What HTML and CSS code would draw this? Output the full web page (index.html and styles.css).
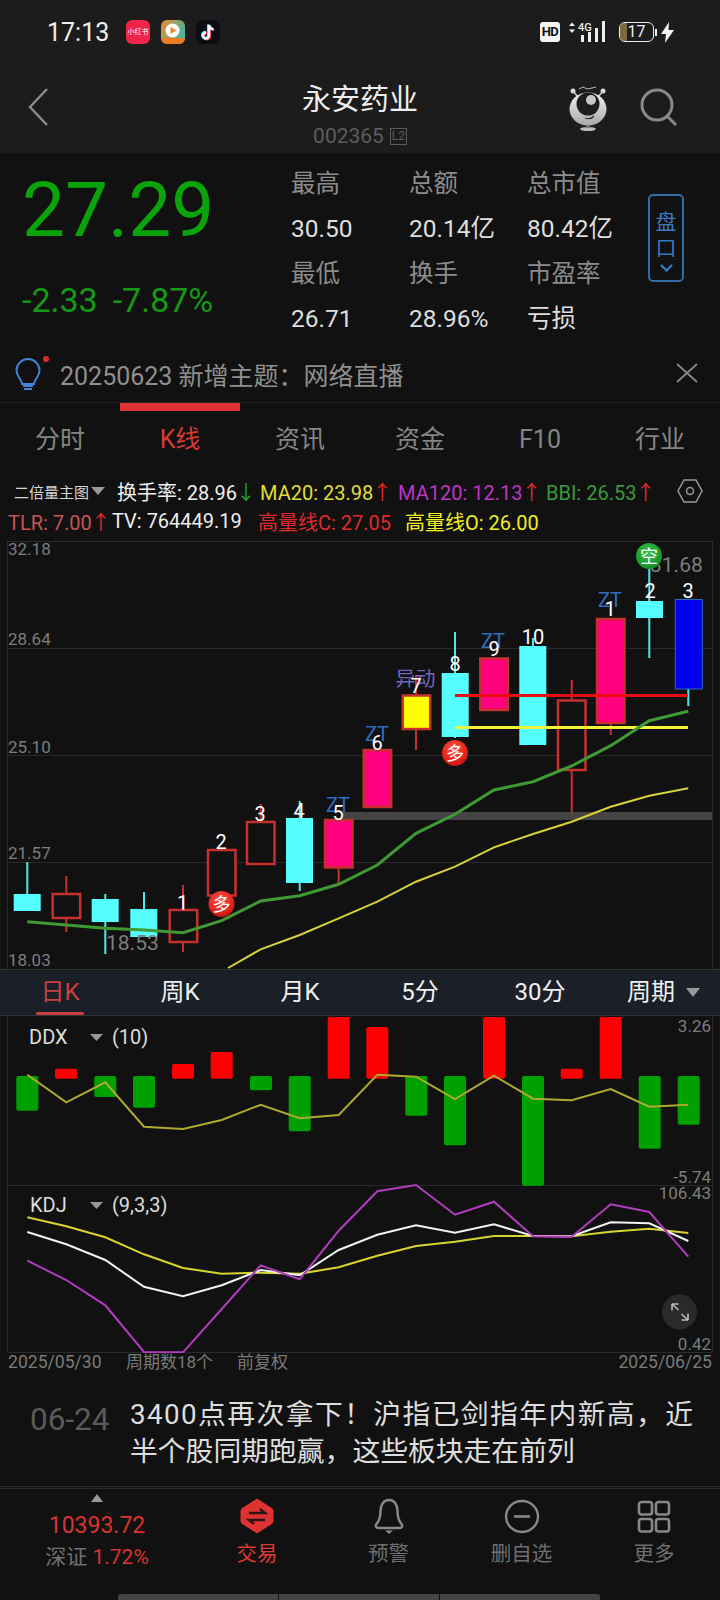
FILE: index.html
```html
<!DOCTYPE html>
<html lang="zh-CN">
<head>
<meta charset="utf-8">
<title>永安药业</title>
<link rel="stylesheet" href="styles.css">
</head>
<body>
<div class="page">
  <header class="top">
    <div class="status">
      <span class="time">17:13</span>
      <div class="apps">
        <span class="app app-red">小红书</span>
        <svg class="app-svg" viewBox="0 0 24 24"><defs><linearGradient id="og" x1="0" y1="0" x2="1" y2="0.6"><stop offset="0" stop-color="#f08a2c"/><stop offset="1" stop-color="#3fb8a0"/></linearGradient></defs><rect width="24" height="24" rx="6" fill="url(#og)"/><path d="M0 18h24v0a6 6 0 0 1-6 6H6a6 6 0 0 1-6-6z" fill="#ee7a22"/><circle cx="11.5" cy="10.5" r="7" fill="#fff"/><path d="M9.5 7l6 3.5-6 3.5z" fill="#ee8a2c"/></svg>
        <svg class="app-svg" viewBox="0 0 24 24"><rect width="24" height="24" rx="6" fill="#0b0b14"/><path d="M13 5v10.5a3 3 0 1 1-3-3" fill="none" stroke="#25f4ee" stroke-width="2.6" transform="translate(-.8 -.4)"/><path d="M13 5c.4 2.6 2 4 4.4 4.3" fill="none" stroke="#25f4ee" stroke-width="2.6" transform="translate(-.8 -.4)"/><path d="M13 5v10.5a3 3 0 1 1-3-3" fill="none" stroke="#fe2c55" stroke-width="2.6" transform="translate(.8 .6)"/><path d="M13 5c.4 2.6 2 4 4.4 4.3" fill="none" stroke="#fe2c55" stroke-width="2.6" transform="translate(.8 .6)"/><path d="M13 5v10.5a3 3 0 1 1-3-3M13 5c.4 2.6 2 4 4.4 4.3" fill="none" stroke="#fff" stroke-width="2.4"/></svg>
      </div>
      <div class="sys">
        <span class="hd">HD</span>
        <svg class="signal" viewBox="0 0 38 22"><path d="M3 1.5l3 3.5H0zM3 12l3-3.500H0z" fill="#eee"/><text class="net" x="9" y="10">4G</text><rect x="12" y="14" width="3" height="7" fill="#eee"/><rect x="19" y="11" width="3" height="10" fill="#eee"/><rect x="26" y="7" width="3" height="14" fill="#eee"/><rect x="33" y="0" width="3" height="21" fill="#eee"/></svg>
        <div class="battery"><span class="battery-fill"></span><span class="battery-num">17</span></div>
        <span class="battery-cap"></span>
        <svg class="bolt" viewBox="0 0 13 21"><path d="M8 0L0 12h5l-1 9 9-13H7.500z" fill="#f2f2f2"/></svg>
      </div>
    </div>
    <div class="titlebar">
      <svg class="back" viewBox="0 0 20 38"><path d="M19 1L2 19l17 18" fill="none" stroke="#8c8c8c" stroke-width="2.400"/></svg>
      <div class="title">
        <div class="name">永安药业</div>
        <div class="code">002365<span class="l2">L2</span></div>
      </div>
      <svg class="mascot" viewBox="0 0 40 46"><defs><linearGradient id="mg" x1="0" y1="0" x2="0" y2="1"><stop offset="0" stop-color="#f2f2f2"/><stop offset="1" stop-color="#a8a8a8"/></linearGradient></defs><circle cx="5" cy="5" r="2.500" fill="#ddd"/><circle cx="35" cy="5" r="2.500" fill="#ddd"/><path d="M5 5l5 6M35 5l-5 6" stroke="#ccc" stroke-width="1.500"/><path d="M11 3l4-2 4 2 5-1 4-1" fill="none" stroke="#bbb" stroke-width="1"/><ellipse cx="20" cy="23" rx="18.500" ry="16.500" fill="url(#mg)"/><circle cx="20" cy="18" r="11.500" fill="#1d1d1d"/><circle cx="23" cy="14" r="5" fill="#c8c8c8"/><path d="M17 32q6 2 9-2" fill="none" stroke="#333" stroke-width="1.300"/><ellipse cx="20" cy="43" rx="8" ry="2" fill="#bbb"/><rect x="18" y="39" width="4" height="3" fill="#777"/></svg>
      <svg class="search" viewBox="0 0 38 38"><circle cx="17" cy="17" r="15" fill="none" stroke="#888" stroke-width="3"/><path d="M27 28l9 9" stroke="#888" stroke-width="3"/></svg>
    </div>
  </header>

  <section class="quote">
    <div class="price">
      <div class="last">27.29</div>
      <div class="chg"><span>-2.33</span><span>-7.87%</span></div>
    </div>
    <dl class="stats">
      <div class="stat"><dt>最高</dt><dd>30.50</dd></div>
      <div class="stat"><dt>总额</dt><dd>20.14亿</dd></div>
      <div class="stat"><dt>总市值</dt><dd>80.42亿</dd></div>
      <div class="stat"><dt>最低</dt><dd>26.71</dd></div>
      <div class="stat"><dt>换手</dt><dd>28.96%</dd></div>
      <div class="stat"><dt>市盈率</dt><dd>亏损</dd></div>
    </dl>
    <div class="pankou">
      <span>盘</span><span>口</span>
      <svg class="chev" viewBox="0 0 13 8"><path d="M1 1l5.500 5.500L12 1" fill="none" stroke="#3a78bd" stroke-width="2.400"/></svg>
    </div>
  </section>

  <section class="notice">
    <div class="bulb">
      <svg viewBox="0 0 34 34"><path d="M13 3a11.500 11.500 0 0 0-11.500 11.500c0 5 3.500 7.500 5 11.500 .3 .8 .5 1.500 .5 2h12c0-.5 .2-1.200 .5-2 1.500-4 5-6.500 5-11.500A11.500 11.500 0 0 0 13 3z" fill="none" stroke="#3f86d6" stroke-width="2"/><path d="M8 30h10M9 33h8" stroke="#3f86d6" stroke-width="1.800"/><circle cx="31" cy="3" r="3" fill="#e02b2b"/></svg>
    </div>
    <div class="notice-text">20250623 新增主题：网络直播</div>
    <svg class="close" viewBox="0 0 22 20"><path d="M1 1l20 18M21 1L1 19" stroke="#888" stroke-width="1.800"/></svg>
  </section>

  <nav class="tabs">
    <span class="tab">分时</span>
    <span class="tab active">K线</span>
    <span class="tab">资讯</span>
    <span class="tab">资金</span>
    <span class="tab">F10</span>
    <span class="tab">行业</span>
  </nav>

  <section class="legend">
    <div class="legend-row">
      <span class="mode">二倍量主图<i class="tri"></i></span>
      <span class="c-white lg-a">换手率: 28.96<b class="c-green">↓</b></span>
      <span class="c-yellow lg-b">MA20: 23.98<b class="c-red">↑</b></span>
      <span class="c-purple lg-c">MA120: 12.13<b class="c-red">↑</b></span>
      <span class="c-green2">BBI: 26.53<b class="c-red">↑</b></span>
      <svg class="hex" viewBox="0 0 26 26"><path d="M7 2h12l6 11-6 11H7L1 13z" fill="none" stroke="#999" stroke-width="1.500"/><circle cx="13" cy="13" r="3.500" fill="none" stroke="#999" stroke-width="1.500"/></svg>
    </div>
    <div class="legend-row row2">
      <span class="c-tlr lg-t">TLR: 7.00<b class="c-red">↑</b></span>
      <span class="c-white lg-v">TV: 764449.19</span>
      <span class="c-red lg-h">高量线C: 27.05</span>
      <span class="c-yl2">高量线O: 26.00</span>
    </div>
  </section>

  <svg class="chart" viewBox="0 541 720 428" width="720" height="428">
    <defs>
      <radialGradient id="redball" cx="0.45" cy="0.35" r="0.7"><stop offset="0" stop-color="#ff5a4a"/><stop offset="0.7" stop-color="#e2201a"/><stop offset="1" stop-color="#b01410"/></radialGradient>
      <radialGradient id="greenball" cx="0.45" cy="0.35" r="0.7"><stop offset="0" stop-color="#36c04a"/><stop offset="1" stop-color="#0f8a24"/></radialGradient>
    </defs>
    <g class="grid">
      <path d="M8 541.500H712M8 648.500H712M8 755.500H712M8 862.500H712M7.500 541V969M712.500 541V969"/>
    </g>
    <rect class="band" x="343" y="812" width="369" height="8"/>
    <g class="wick-c">
      <path d="M27.300 862V894M105.300 894V954M144 892V937M299.700 801V891M455 632V738M533 638V646M649.300 563V658M688.300 689V706"/>
    </g>
    <g class="wick-r">
      <path d="M66.300 876V932M183 885V952M260.700 804V821M338.700 867V885M416 675V750M571.700 680V813M610.700 723V735"/>
    </g>
    <rect class="c-body" x="13.700" y="894" width="27" height="17"/>
    <rect class="c-body" x="91.700" y="899" width="27" height="23"/>
    <rect class="c-body" x="130.300" y="909" width="27" height="28"/>
    <rect class="c-body" x="286" y="818" width="27" height="65"/>
    <rect class="c-body" x="441.700" y="673" width="27" height="64"/>
    <rect class="c-body" x="519.300" y="646" width="27" height="99"/>
    <rect class="c-body" x="636" y="601" width="27" height="17"/>
    <rect class="h-body" x="52.700" y="894" width="27.500" height="24"/>
    <rect class="h-body" x="169.700" y="910" width="27.500" height="32"/>
    <rect class="h-body" x="208" y="850" width="27.500" height="45.500"/>
    <rect class="h-body" x="247" y="822" width="27.500" height="42"/>
    <rect class="h-body" x="558" y="700.500" width="27.500" height="69.500"/>
    <rect class="p-body" x="325" y="820" width="27.500" height="47.500"/>
    <rect class="p-body" x="363.700" y="750" width="27.500" height="57"/>
    <rect class="p-body" x="480.300" y="658.500" width="27.500" height="51.500"/>
    <rect class="p-body" x="597" y="619" width="27.500" height="104"/>
    <rect class="y-body" x="402.700" y="695.500" width="27.500" height="33.500"/>
    <rect class="b-body" x="675.300" y="599.500" width="27" height="89.500"/>
    <path class="l-red" d="M455 695.500H688"/>
    <path class="l-yel" d="M455 727.500H688"/>
    <path class="ma120" d="M228 968L260.700 949.300L299.700 935L338.700 918.300L377.300 901.700L416 881.700L455 866.700L494 847.300L533 834L571.700 821.700L610.700 806.700L649.300 795.700L688.300 788.300"/>
    <path class="ma20" d="M27.300 921.700L66.300 925L105.300 928.300L144 930L183 932.700L221.700 920.700L260.700 901L299.700 895.700L338.700 884.300L377.300 865L416 833.300L455 814.300L494 790L533 781.700L571.700 766L610.700 745.700L649.300 720.700L688.300 711.300"/>
    <text class="ax" x="8" y="549">32.18</text>
    <text class="ax" x="8" y="639">28.64</text>
    <text class="ax" x="8" y="747">25.10</text>
    <text class="ax" x="8" y="853">21.57</text>
    <text class="ax" x="8" y="960">18.03</text>
    <text class="mark" x="106" y="943">18.53</text>
    <text class="mark" x="650" y="565">31.68</text>
    <g class="zt">
      <text x="338" y="805">ZT</text><text x="377" y="734">ZT</text><text x="493" y="641">ZT</text><text x="610" y="600">ZT</text>
      <text class="yd" x="415.500" y="679">异动</text>
    </g>
    <g class="num">
      <text x="182.500" y="903">1</text><text x="221" y="842">2</text><text x="260" y="814">3</text><text x="299" y="811">4</text><text x="338" y="813">5</text><text x="377" y="743">6</text><text x="416" y="686">7</text><text x="455" y="664">8</text><text x="494" y="649">9</text><text x="533" y="637">10</text><text x="610" y="609">1</text><text x="650" y="591">2</text><text x="688" y="591">3</text>
    </g>
    <circle class="dot-r" cx="221.500" cy="904" r="13"/><text class="dot-t" x="221.500" y="904">多</text>
    <circle class="dot-r" cx="455" cy="753" r="13"/><text class="dot-t" x="455" y="753">多</text>
    <circle class="dot-g" cx="649" cy="556" r="13"/><text class="dot-t" x="649" y="556">空</text>
  </svg>

  <nav class="periods">
    <span class="period active">日K</span>
    <span class="period">周K</span>
    <span class="period">月K</span>
    <span class="period">5分</span>
    <span class="period">30分</span>
    <span class="period more">周期<i class="tri tri-lg"></i></span>
  </nav>

  <svg class="panes" viewBox="0 1016 720 337" width="720" height="337">
    <path class="gridline" d="M7.500 1016V1353M712.500 1016V1353M8 1185.500H712M8 1352.500H712"/>
    <g class="gbar">
      <rect x="16.300" y="1076" width="22" height="34.700" rx="2"/><rect x="94.300" y="1076" width="22" height="21" rx="2"/><rect x="133" y="1076" width="22" height="31.700" rx="2"/><rect x="250" y="1076" width="22" height="14.300" rx="2"/><rect x="288.700" y="1076" width="22" height="55.300" rx="2"/><rect x="405.300" y="1076" width="22" height="39.700" rx="2"/><rect x="444" y="1076" width="22" height="69.300" rx="2"/><rect x="522" y="1076" width="22" height="109.700" rx="2"/><rect x="638.700" y="1076" width="22" height="72.700" rx="2"/><rect x="677.700" y="1076" width="22" height="48.700" rx="2"/>
    </g>
    <g class="rbar">
      <rect x="55" y="1068.700" width="22" height="10" rx="2"/><rect x="172" y="1064" width="22" height="14.700" rx="2"/><rect x="210.700" y="1052" width="22" height="26.700" rx="2"/><rect x="327.700" y="1017" width="22" height="61.700" rx="2"/><rect x="366.300" y="1027" width="22" height="51.700" rx="2"/><rect x="483" y="1017" width="22" height="61.700" rx="2"/><rect x="560.700" y="1068.700" width="22" height="10" rx="2"/><rect x="599.700" y="1017" width="22" height="61.700" rx="2"/>
    </g>
    <path class="ddx" d="M27.300 1074.700L66.300 1102.300L105.300 1082.300L144 1126.700L183 1129L221.700 1120L260.700 1104.700L299.700 1118.300L338.700 1115L377.300 1074.700L416 1076.700L455 1099L494 1075.700L533 1098.700L571.700 1100.300L610.700 1089L649.300 1106.700L688.300 1104.700"/>
    <path class="kd-y" d="M27.300 1217.300L66.300 1226.300L105.300 1237.300L144 1254.300L183 1268L221.700 1273.700L260.700 1272.700L299.700 1273.700L338.700 1267.300L377.300 1255.700L416 1246L455 1241.700L494 1236L533 1236L571.700 1236.300L610.700 1231.700L649.300 1228.700L688.300 1233"/>
    <path class="kd-w" d="M27.300 1232L66.300 1244.300L105.300 1260L144 1286.700L183 1296.300L221.700 1285.300L260.700 1270L299.700 1275.300L338.700 1250L377.300 1234.700L416 1225.300L455 1232.700L494 1224.300L533 1236L571.700 1236.300L610.700 1222.300L649.300 1223.300L688.300 1241"/>
    <path class="kd-p" d="M27.300 1260.700L66.300 1280L105.300 1305.300L144 1352L183 1352.300L221.700 1309L260.700 1265.300L299.700 1279.300L338.700 1230.700L377.300 1191.300L416 1185L455 1214.700L494 1201.700L533 1236.300L571.700 1236.700L610.700 1204.300L649.300 1212L688.300 1256.700"/>
    <text class="pane-t" x="29" y="1037">DDX</text><path class="tri-s" d="M90 1034h13l-6.500 7z"/><text class="pane-t" x="112" y="1037">(10)</text>
    <text class="pane-t" x="30" y="1205">KDJ</text><path class="tri-s" d="M90 1202h13l-6.500 7z"/><text class="pane-t" x="112" y="1205">(9,3,3)</text>
    <text class="ax end" x="711" y="1026">3.26</text>
    <text class="ax end" x="711" y="1177">-5.74</text>
    <text class="ax end" x="711" y="1193">106.43</text>
    <text class="ax end" x="711" y="1344">0.42</text>
    <circle cx="679.500" cy="1312" r="17.500" fill="#2a2a2a"/>
    <path class="expand" d="M672 1304l6.500 6M672 1304v6.500M672 1304h6.500M688 1320l-6.500-6M688 1320v-6.500M688 1320h-6.500"/>
  </svg>

  <div class="dates">
    <span class="d-start">2025/05/30</span>
    <span class="d-count">周期数18个</span>
    <span class="d-adj">前复权</span>
    <span class="d-end">2025/06/25</span>
  </div>

  <section class="news">
    <span class="news-date">06-24</span>
    <p class="news-title"><span class="line-a">3400点再次拿下！沪指已剑指年内新高，近</span><span class="line-b">半个股同期跑赢，这些板块走在前列</span></p>
  </section>

  <footer class="bottom">
    <div class="bottom-item index">
      <i class="tri-up"></i>
      <span class="idx-val">10393.72</span>
      <span class="idx-name">深证 <em>1.72%</em></span>
    </div>
    <div class="bottom-item act">
      <svg class="b-icon" viewBox="0 0 36 36"><path d="M18 0.500L32 9.500C33.500 10.500 34.500 11.500 34.500 13.500V22.500C34.500 24.500 33.500 25.500 32 26.500L18 35.500L4 26.500C2.500 25.500 1.500 24.500 1.500 22.500V13.500C1.500 11.500 2.500 10.500 4 9.500z" fill="#de3230"/><path d="M10 15H26L21 11M26 22H10L15 26" fill="none" stroke="#2a1414" stroke-width="2.400"/></svg>
      <span class="b-label">交易</span>
    </div>
    <div class="bottom-item">
      <svg class="b-icon" viewBox="0 0 36 36"><path d="M18 2C12 2 9.500 8 9.500 13C9.500 20 8 23 5.500 26C4 28 5 30 7.500 30H28.500C31 30 32 28 30.500 26C28 23 26.500 20 26.500 13C26.500 8 24 2 18 2z" fill="none" stroke="#888" stroke-width="2.500"/><path d="M14 32.500h8l-4 3.500z" fill="#888"/></svg>
      <span class="b-label">预警</span>
    </div>
    <div class="bottom-item">
      <svg class="b-icon" viewBox="0 0 36 36"><ellipse cx="18" cy="18.500" rx="16" ry="15.500" fill="none" stroke="#888" stroke-width="2.400"/><path d="M10 18.500h16" stroke="#888" stroke-width="2.600"/></svg>
      <span class="b-label">删自选</span>
    </div>
    <div class="bottom-item">
      <svg class="b-icon" viewBox="0 0 36 36"><g fill="none" stroke="#888" stroke-width="2.600"><rect x="3" y="4" width="13" height="12.500" rx="2.500"/><rect x="20" y="4" width="13" height="12.500" rx="2.500"/><rect x="3" y="21" width="13" height="12.500" rx="2.500"/><rect x="20" y="21" width="13" height="12.500" rx="2.500"/></g></svg>
      <span class="b-label">更多</span>
    </div>
  </footer>

  <div class="gesture"><span></span><span></span><span></span></div>
</div>
</body>
</html>
```
FILE: styles.css
```css
* { box-sizing: border-box; }
html, body { margin: 0; padding: 0; background: #111; }
body { font-family: Roboto, "Noto Sans CJK SC", sans-serif; color: #ddd; }
.page { width: 720px; height: 1600px; overflow: hidden; background: #111; display: flex; flex-direction: column; }
svg { display: block; }

/* header */
.top { background: #1c1c1c; height: 153px; flex: none; }
.status { height: 64px; display: flex; align-items: center; padding: 0 46px 0 47px; }
.time { font-size: 25px; color: #eee; width: 79px; }
.apps { display: flex; gap: 11px; }
.app { width: 24px; height: 24px; border-radius: 6px; display: flex; align-items: center; justify-content: center; font-size: 7px; line-height: 1; color: #fff; white-space: nowrap; }
.app-red { background: #f0234a; }
.app-svg { width: 24px; height: 24px; }
.sys { margin-left: auto; display: flex; align-items: center; }
.hd { width: 20px; height: 20px; background: #f5f5f5; color: #111; border-radius: 3px; font-size: 13px; font-weight: 700; text-align: center; line-height: 20px; letter-spacing: -.5px; }
.signal { width: 38px; height: 22px; margin-left: 9px; }
.net { font-size: 11px; font-weight: 500; fill: #eee; }
.battery { position: relative; width: 35px; height: 20px; margin-left: 12px; border: 1.500px solid #eee; border-radius: 6px; overflow: hidden; text-align: center; }
.battery-fill { position: absolute; left: 0; top: 0; bottom: 0; width: 7px; background: #7d6a3c; }
.battery-num { position: relative; font-size: 16px; line-height: 17px; display: block; color: #eee; }
.battery-cap { width: 2px; height: 7px; margin-left: 1px; background: #eee; }
.bolt { width: 13px; height: 21px; margin-left: 4px; }
.titlebar { height: 89px; display: flex; align-items: flex-start; position: relative; }
.back { position: absolute; left: 28px; top: 24px; width: 20px; height: 38px; }
.title { width: 100%; text-align: center; padding-top: 16px; }
.name { font-size: 29px; line-height: 40px; color: #eee; }
.code { font-size: 21px; line-height: 26px; color: #5c5c5c; display: flex; justify-content: center; align-items: center; margin-top: 3px; }
.l2 { width: 17px; font-size: 12px; line-height: 15px; border: 1px solid #5c5c5c; margin-left: 6px; text-align: center; }
.mascot { position: absolute; left: 568px; top: 22px; width: 40px; height: 46px; }
.search { position: absolute; left: 640px; top: 24px; width: 38px; height: 38px; }

/* quote */
.quote { flex: none; height: 192px; display: flex; position: relative; }
.price { width: 291px; padding-left: 22px; }
.last { font-size: 76.500px; line-height: 88px; color: #0aa40a; margin-top: 13px; }
.chg { display: flex; gap: 15px; font-size: 34px; line-height: 44px; color: #159a15; margin-top: 24px; }
.stats { margin: 0; display: grid; grid-template-rows: repeat(4, 45px); grid-template-columns: repeat(3, 118px); padding-top: 8px; align-content: start; }
.stat { display: contents; }
.stats dt, .stats dd { margin: 0; font-size: 24.500px; line-height: 45px; white-space: nowrap; }
.stats dt { color: #8c8c8c; }
.stats dd { color: #dedede; }
.stat:nth-child(1) dt { grid-area: 1 / 1; } .stat:nth-child(1) dd { grid-area: 2 / 1; }
.stat:nth-child(2) dt { grid-area: 1 / 2; } .stat:nth-child(2) dd { grid-area: 2 / 2; }
.stat:nth-child(3) dt { grid-area: 1 / 3; } .stat:nth-child(3) dd { grid-area: 2 / 3; }
.stat:nth-child(4) dt { grid-area: 3 / 1; } .stat:nth-child(4) dd { grid-area: 4 / 1; }
.stat:nth-child(5) dt { grid-area: 3 / 2; } .stat:nth-child(5) dd { grid-area: 4 / 2; }
.stat:nth-child(6) dt { grid-area: 3 / 3; } .stat:nth-child(6) dd { grid-area: 4 / 3; }
.pankou { position: absolute; left: 648px; top: 41px; width: 36px; height: 88px; border: 2px solid #2f6ca8; border-radius: 5px; display: flex; flex-direction: column; align-items: center; color: #3a78bd; font-size: 21px; line-height: 26px; padding-top: 13px; }
.chev { width: 13px; height: 8px; margin-top: 3px; }

/* notice */
.notice { flex: none; height: 58px; display: flex; align-items: center; border-bottom: 1px solid #232323; position: relative; }
.bulb { width: 34px; height: 34px; margin-left: 15px; margin-top: -2px; }
.notice-text { margin-left: 11px; font-size: 25px; color: #8f8f8f; white-space: nowrap; }
.close { position: absolute; left: 676px; top: 18px; width: 22px; height: 20px; }

/* tabs */
.tabs { flex: none; height: 66px; display: grid; grid-template-columns: repeat(6, 120px); grid-template-rows: 66px; position: relative; }
.tab { text-align: center; font-size: 25px; line-height: 74px; color: #858585; position: relative; }
.tab.active { color: #d63a35; }
.tab.active::before { content: ""; position: absolute; left: 0; right: 0; top: 0; height: 8px; background: #e03434; }

/* legend */
.legend { flex: none; height: 72px; }
.legend-row { display: flex; align-items: center; height: 30px; padding-left: 14px; font-size: 20px; position: relative; white-space: nowrap; margin-top: 7px; }
.legend-row b { font-weight: 400; margin: 0 -3px 0 -1px; }
.row2 { padding-left: 8px; margin-top: 0; }
.mode { width: 103px; font-size: 15px; color: #d5d5d5; display: flex; align-items: center; }
.tri { display: inline-block; width: 0; height: 0; border-left: 7px solid transparent; border-right: 7px solid transparent; border-top: 8px solid #999; margin-left: 2px; }
.lg-a { width: 143px; }
.lg-b { width: 138px; }
.lg-c { width: 148px; }
.lg-t { width: 104px; }
.lg-v { width: 146px; }
.lg-h { width: 147px; }
.c-white { color: #eee; }
.c-green { color: #22a030; }
.c-green2 { color: #3b9a3b; }
.c-yellow { color: #e0de36; }
.c-yl2 { color: #f0f022; }
.c-purple { color: #bf33c8; }
.c-red { color: #e02a2a; }
.c-tlr { color: #c65454; }
.hex { position: absolute; left: 677px; top: 2px; width: 26px; height: 26px; }

/* chart */
.chart { flex: none; overflow: visible; }
.grid path, .gridline { stroke: #2a2a2a; stroke-width: 1; fill: none; }
.band { fill: #444; }
.wick-c path { stroke: #4fe8ea; stroke-width: 2; fill: none; }
.wick-r path { stroke: #c8302e; stroke-width: 2; fill: none; }
.c-body { fill: #55ffff; }
.h-body { fill: #111; stroke: #c8302e; stroke-width: 2.500; }
.p-body { fill: #ff007f; stroke: #c8302e; stroke-width: 2.500; }
.y-body { fill: #ffff00; stroke: #c8302e; stroke-width: 2.500; }
.b-body { fill: #0000ee; stroke: #2a6ab8; stroke-width: 1; }
.l-red { stroke: #e60c12; stroke-width: 3; fill: none; }
.l-yel { stroke: #f2f23a; stroke-width: 3; fill: none; }
.ma20 { stroke: #3f9a34; stroke-width: 3; fill: none; }
.ma120 { stroke: #d8d23a; stroke-width: 2; fill: none; }
.ax { font-size: 17px; fill: #7d7d7d; dominant-baseline: central; }
.ax.end { text-anchor: end; }
.mark { font-size: 21px; fill: #7d7d7d; dominant-baseline: central; }
.zt text { font-size: 20px; fill: #2f6cc0; text-anchor: middle; dominant-baseline: central; }
.zt .yd { fill: #6a66bd; }
.num text { font-size: 20px; fill: #fff; text-anchor: middle; dominant-baseline: central; }
.dot-r { fill: url(#redball); }
.dot-g { fill: url(#greenball); }
.dot-t { font-size: 18px; fill: #fff; text-anchor: middle; dominant-baseline: central; }

/* periods */
.periods { flex: none; height: 47px; background: #1b1f27; border-top: 1px solid #333; border-bottom: 1px solid #333; display: grid; grid-template-columns: repeat(6, 120px); }
.period { text-align: center; font-size: 24px; line-height: 45px; color: #f0f0f0; position: relative; }
.period.active { color: #c9403f; }
.period.active::after { content: ""; position: absolute; left: 36px; width: 48px; bottom: 0; height: 3px; border-radius: 2px; background: #c9403f; }
.period.more { display: flex; justify-content: flex-end; align-items: center; padding-right: 20px; }
.tri-lg { border-left-width: 7px; border-right-width: 7px; border-top-width: 9px; margin-left: 11px; }

/* panes */
.panes { flex: none; }
.gbar rect { fill: #00a000; }
.rbar rect { fill: #ff0000; }
.ddx { stroke: #aeaa2c; stroke-width: 2; fill: none; }
.kd-y { stroke: #d8d42e; stroke-width: 2; fill: none; }
.kd-w { stroke: #f2f2f2; stroke-width: 2; fill: none; }
.kd-p { stroke: #b23cc0; stroke-width: 2; fill: none; }
.pane-t { font-size: 20px; fill: #ddd; dominant-baseline: central; }
.tri-s { fill: #999; }
.expand { stroke: #bbb; stroke-width: 1.600; fill: none; }

/* dates */
.dates { flex: none; height: 19px; position: relative; display: flex; font-size: 17.600px; line-height: 19px; color: #7a7a7a; padding: 0 8px; }
.d-start { width: 118px; }
.d-count { width: 111px; font-size: 17px; }
.d-adj { font-size: 17px; }
.d-end { margin-left: auto; }

/* news */
.news { flex: none; height: 114px; display: flex; padding-left: 30px; }
.news-date { font-size: 31.500px; line-height: 37px; color: #5a5a5a; width: 100px; padding-top: 29px; height: 66px; }
.news-title { margin: 0; padding-top: 24px; font-size: 27.800px; line-height: 37px; color: #ddd; white-space: nowrap; }
.line-a, .line-b { display: block; }
.line-a { letter-spacing: 1.400px; }

/* bottom */
.bottom { flex: none; height: 108px; border-top: 3px double #2a2a2a; display: grid; grid-template-columns: 192px 130px 133px 133px 132px; }
.bottom-item { display: flex; flex-direction: column; align-items: center; padding-top: 9px; }
.b-icon { width: 36px; height: 36px; }
.b-label { font-size: 20.500px; line-height: 28px; color: #6f6f6f; margin-top: 6px; }
.act .b-label { color: #de3a35; }
.bottom-item.index { padding-top: 5px; padding-left: 2px; }
.tri-up { width: 0; height: 0; border-left: 6.500px solid transparent; border-right: 6.500px solid transparent; border-bottom: 8px solid #999; }
.idx-val { font-size: 23px; line-height: 30px; color: #d8332e; margin-top: 9px; }
.idx-name { font-size: 21px; line-height: 30px; color: #707070; margin-top: 1px; }
.idx-name em { font-style: normal; color: #d8332e; }
.gesture { flex: none; display: flex; gap: 1px; margin-left: 118px; height: 6px; margin-top: auto; }
.gesture span { height: 6px; background: #444; width: 160px; }
.gesture span:first-child { border-top-left-radius: 3px; }
.gesture span:last-child { border-top-right-radius: 3px; }
```
